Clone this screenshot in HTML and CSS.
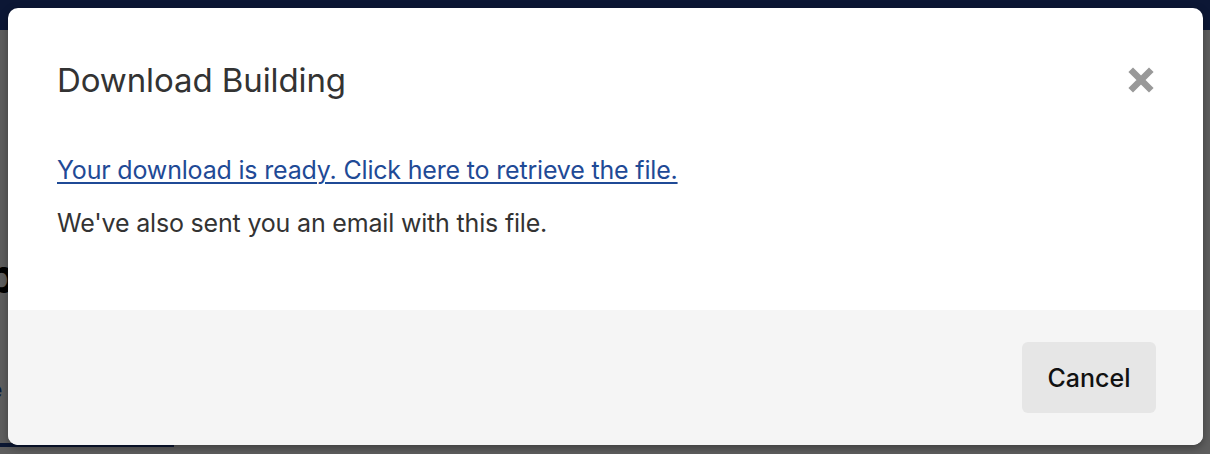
FILE: index.html
```html
<!DOCTYPE html>
<html lang="en">
<head>
<meta charset="utf-8">
<title>Download Building</title>
<link rel="stylesheet" href="styles.css">
</head>
<body>
<div class="page">
  <header class="topbar"></header>
  <main class="content">
    <h1 class="page-title">p</h1>
    <a class="page-link" href="#">e</a>
    <div class="tab-line"></div>
  </main>
</div>
<div class="overlay">
  <div class="modal" role="dialog" aria-labelledby="dlg-title">
    <div class="modal-body">
      <div class="modal-header">
        <h2 id="dlg-title" class="modal-title">Download Building</h2>
        <button class="close-btn" aria-label="Close">
          <svg width="28" height="28" viewBox="0 0 28 28"><path d="M6 6 22 22M22 6 6 22" stroke="#999" stroke-width="6.5" stroke-linecap="square" fill="none"/></svg>
        </button>
      </div>
      <p class="msg"><a class="dl-link" href="#">Your download is ready. Click here to retrieve the file.</a></p>
      <p class="msg">We've also sent you an email with this file.</p>
    </div>
    <div class="modal-footer">
      <button class="btn-cancel">Cancel</button>
    </div>
  </div>
</div>
</body>
</html>
```
FILE: styles.css
```css
* { box-sizing: border-box; }
html, body { margin: 0; padding: 0; }
body {
  width: 1210px;
  height: 454px;
  overflow: hidden;
  background: #fff;
  font-family: Inter, "Liberation Sans", Arial, sans-serif;
  position: relative;
}
.page { width: 100%; height: 100%; }
.topbar { height: 30px; background: #213f8f; }
.content { display: flex; flex-direction: column; }
.page-title { margin: 222px 0 0 -14px; font-size: 48px; line-height: 48px; font-weight: 700; color: #000; }
.page-link { margin: 78px 0 0 -12px; font-size: 24px; font-weight: 700; color: #1f4ea0; text-decoration: none; line-height: 24px; }
.tab-line { margin-top: 41px; width: 174px; height: 4px; background: #1f3f8a; }

.overlay {
  position: absolute;
  inset: 0;
  background: rgba(0, 0, 0, 0.63);
  padding: 8px 7px 9px 8px;
}
.modal {
  height: 437px;
  background: #fff;
  border-radius: 10px;
  overflow: hidden;
  display: flex;
  flex-direction: column;
  box-shadow: 0 3px 8px rgba(0,0,0,0.35);
}
.modal-body { flex: 1; padding: 50px 49px 0 49px; }
.modal-header { display: flex; justify-content: space-between; align-items: center; }
.modal-title { margin: 0; font-size: 33px; font-weight: 400; color: #333; line-height: 44px; letter-spacing: -0.1px; }
.close-btn { border: 0; background: none; padding: 0; margin-right: -1px; width: 28px; height: 28px; cursor: pointer; display: flex; }
.msg { margin: 0; font-size: 25px; line-height: 32px; color: #333; letter-spacing: -0.18px; }
.msg:first-of-type { margin-top: 52px; }
.msg + .msg { margin-top: 21px; }
.dl-link { color: #1f4a96; text-decoration: underline; text-underline-offset: 3px; text-decoration-thickness: 2px; }
.modal-footer {
  height: 135px;
  background: #f5f5f5;
  display: flex;
  justify-content: flex-end;
  align-items: center;
  padding: 0 47px 0 0;
}
.btn-cancel {
  width: 134px;
  height: 71px;
  border: 0;
  border-radius: 6px;
  background: #e6e6e6;
  font-family: inherit;
  font-size: 25px;
  font-weight: 500;
  color: #111;
  cursor: pointer;
}
```
